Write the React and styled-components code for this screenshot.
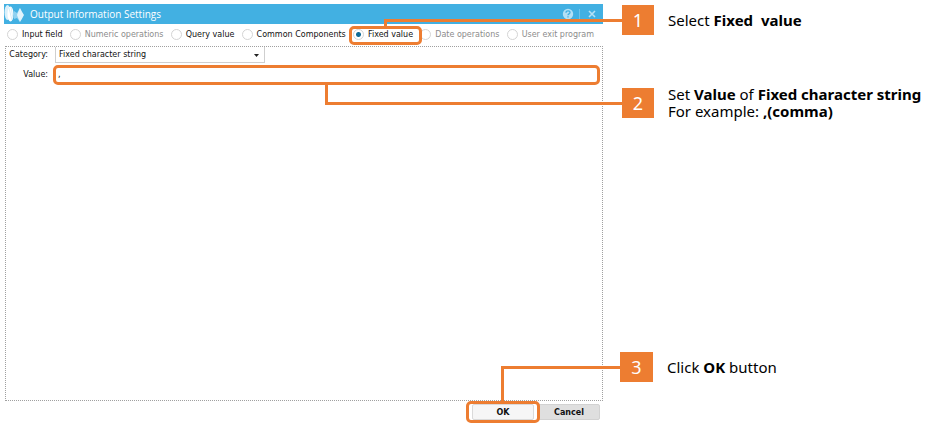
import styled, { createGlobalStyle, css } from "styled-components";

const GlobalStyle = createGlobalStyle`
  *,
  *::before,
  *::after {
    box-sizing: border-box;
  }

  body {
    margin: 0;
    background-color: #fff;
    color: #000;
    font-family: "DejaVu Sans", sans-serif;
  }
`;

const Page = styled.main`
  display: grid;
  grid-template-columns: minmax(0, 1fr) 310px;
  column-gap: 19px;
  min-height: 100vh;
  padding: 4px 0 0 4px;
`;

/* orange frame drawn over whatever it surrounds */
const highlight = css`
  position: relative;

  &::after {
    content: "";
    position: absolute;
    inset: ${(props) => props.$ring};
    border: 3px solid #ed7d31;
    border-radius: 5px;
    pointer-events: none;
  }
`;

const Dialog = styled.section`
  display: flex;
  flex-direction: column;
  padding-bottom: 11px;
  font-size: 8px;
  line-height: 14px;
  color: #111;
`;

const TitleBar = styled.header`
  display: flex;
  align-items: center;
  height: 20px;
  padding-right: 6px;
  background-color: #42b0e2;
  color: #fff;
`;

const Title = styled.h1`
  flex: 1;
  margin: 0 0 0 6px;
  font-size: 10px;
  font-weight: 400;
  font-family: "Open Sans", sans-serif;
`;

const TitleButton = styled.button`
  display: flex;
  padding: 0;
  border: none;
  background: none;
  color: #b4e0f5;
  cursor: pointer;
`;

const Divider = styled.span`
  width: 1px;
  height: 10px;
  margin: 0 7px 0 5px;
  background-color: #6fc3ea;
`;

const Options = styled.div`
  display: flex;
  align-items: center;
  justify-content: space-between;
  height: 22px;
  padding: 0 9px 1px 3px;
`;

const Option = styled.label`
  display: flex;
  align-items: center;
  gap: 4px;
  white-space: nowrap;
  color: ${(props) => (props.$off ? "#8c8c8c" : "#111")};
  ${(props) => props.$ring && highlight}
`;

const Radio = styled.input`
  appearance: none;
  width: 11px;
  height: 11px;
  margin: 0;
  border: 1px solid #d4d4d4;
  border-radius: 50%;
  background-color: #fff;

  &:checked {
    background-image: radial-gradient(#0f6a96 2px, transparent 3px);
  }
`;

const Panel = styled.div`
  flex: 1;
  display: grid;
  grid-template-columns: 42px minmax(0, 1fr);
  grid-auto-rows: max-content;
  gap: 3px 7px;
  margin-left: 1px;
  padding: 0 2px 0 0;
  border: 1px dotted #a0a0a0;
`;

const FieldLabel = styled.label`
  align-self: center;
  justify-self: end;
`;

const SelectBox = styled.div`
  position: relative;
  width: 210px;

  svg {
    position: absolute;
    top: 7px;
    right: 6px;
    pointer-events: none;
  }
`;

const Select = styled.select`
  appearance: none;
  display: block;
  width: 100%;
  height: 16px;
  padding: 0 3px;
  border: 1px solid #cfcfcf;
  border-top: none;
  background-color: #fff;
  color: inherit;
  font: inherit;
`;

const ValueBox = styled.div`
  ${highlight}
`;

const ValueInput = styled.input`
  display: block;
  width: 100%;
  height: 17px;
  padding: 0 3px;
  border: none;
  color: inherit;
  font: inherit;
  outline: none;
`;

const Actions = styled.footer`
  display: flex;
  justify-content: flex-end;
  gap: 4px;
  padding: 3px 3px 0 0;
`;

const OkBox = styled.div`
  ${highlight}
`;

const Button = styled.button`
  display: block;
  width: 62px;
  height: 16px;
  padding: 0;
  border: 1px solid ${(props) => (props.$primary ? "#dadada" : "#d2d2d2")};
  border-radius: 2px;
  background-color: ${(props) => (props.$primary ? "#f6f6f6" : "#dfdfdf")};
  color: #111;
  font: inherit;
  font-weight: 700;
  line-height: 13px;
  cursor: pointer;
`;

const Steps = styled.ol`
  display: flex;
  flex-direction: column;
  margin: 0;
  padding: 1px 0 49px;
  list-style: none;
  font-family: "Noto Sans", sans-serif;
`;

const Step = styled.li`
  position: relative;
  display: flex;
  align-items: center;
  gap: 14px;
  height: 30px;
  margin-top: ${(props) => props.$space || 0};
  margin-left: ${(props) => (props.$wide ? "-2px" : 0)};
`;

const StepNumber = styled.span`
  display: flex;
  align-items: center;
  justify-content: center;
  width: ${(props) => (props.$wide ? "33px" : "32px")};
  height: 30px;
  background-color: #ed7d31;
  color: #fff;
  font-size: 18px;
`;

const StepText = styled.p`
  margin: 0;
  font-size: 15px;
  line-height: 17px;
  white-space: pre;
`;

/* elbow line from the number back to the control in the dialog */
const Connector = styled.span`
  position: absolute;
  right: 100%;
  width: ${(props) => props.$length};
  height: ${(props) => props.$drop};
  border: 0 solid #ed7d31;
  border-left-width: 3px;
  pointer-events: none;

  ${(props) =>
    props.$up
      ? css`
          bottom: 13px;
          border-bottom-width: 3px;
        `
      : css`
          top: 14px;
          border-top-width: 3px;
        `}
`;

const options = [
  { label: "Input field" },
  { label: "Numeric operations", off: true },
  { label: "Query value" },
  { label: "Common Components" },
  { label: "Fixed value", ring: "-2px -9px -3px -4px" },
  { label: "Date operations", off: true },
  { label: "User exit program", off: true },
];

function Logo() {
  return (
    <svg width="20" height="20" viewBox="0 0 20 20" aria-hidden="true">
      <ellipse cx="3.500" cy="8.500" rx="3" ry="7.500" fill="#d9f0fb" />
      <ellipse cx="6.500" cy="10" rx="3" ry="7.500" fill="#fff" />
      <path d="M5 4l3 12M7 3l2 11" stroke="#c5e8f8" strokeWidth="0.700" />
      <path d="M10 7l3 2 3-5v14l-3-4-3 1z" fill="#8fd2f1" />
      <path d="M16 4q2 4 4 7q-2 4-4 7q-2-4-3-7q1-3 3-7z" fill="#e0f3fc" />
    </svg>
  );
}

export default function App() {
  return (
    <>
      <GlobalStyle />
      <Page>
        <Dialog aria-labelledby="dialog-title">
          <TitleBar>
            <Logo />
            <Title id="dialog-title">Output Information Settings</Title>
            <TitleButton aria-label="Help">
              <svg width="12" height="12" viewBox="0 0 12 12">
                <circle cx="6" cy="6" r="5.2" fill="currentColor" />
                <path
                  d="M4 4.7c0-2.6 4-2.4 4-.2C8 6 6 5.800 6 7.200M6 8.300v1.300"
                  fill="none"
                  stroke="#42b0e2"
                  strokeWidth="1.300"
                />
              </svg>
            </TitleButton>
            <Divider />
            <TitleButton aria-label="Close">
              <svg width="10" height="10" viewBox="0 0 10 10">
                <path
                  d="M2 2l6 6M8 2L2 8"
                  stroke="currentColor"
                  strokeWidth="1.600"
                />
              </svg>
            </TitleButton>
          </TitleBar>

          <Options role="radiogroup" aria-label="Output type">
            {options.map(({ label, off, ring }) => (
              <Option key={label} $off={off} $ring={ring}>
                <Radio
                  type="radio"
                  name="output-type"
                  disabled={off}
                  defaultChecked={label === "Fixed value"}
                />
                {label}
              </Option>
            ))}
          </Options>

          <Panel>
            <FieldLabel htmlFor="category">Category:</FieldLabel>
            <SelectBox>
              <Select id="category">
                <option>Fixed character string</option>
              </Select>
              <svg width="5" height="3" viewBox="0 0 5 3" aria-hidden="true">
                <path d="M0 0h5L2.500 3z" fill="#222" />
              </svg>
            </SelectBox>
            <FieldLabel htmlFor="value">Value:</FieldLabel>
            <ValueBox $ring="-1px 0 -2px -2px">
              <ValueInput id="value" type="text" defaultValue="," />
            </ValueBox>
          </Panel>

          <Actions>
            <OkBox $ring="-3px -6px -3px -6px">
              <Button type="button" $primary>
                OK
              </Button>
            </OkBox>
            <Button type="button">Cancel</Button>
          </Actions>
        </Dialog>

        <Steps>
          <Step>
            <Connector $length="238px" $drop="9px" />
            <StepNumber>1</StepNumber>
            <StepText>
              Select <b>Fixed {" "}value</b>
            </StepText>
          </Step>
          <Step $space="53px">
            <Connector $length="297px" $drop="22px" $up />
            <StepNumber>2</StepNumber>
            <StepText>
              Set <b>Value</b> of <b>Fixed character string</b>
              <br />
              For example: <b>,(comma)</b>
            </StepText>
          </Step>
          <Step $space="auto" $wide>
            <Connector $length="119px" $drop="36px" />
            <StepNumber $wide>3</StepNumber>
            <StepText>
              Click <b>OK</b> button
            </StepText>
          </Step>
        </Steps>
      </Page>
    </>
  );
}
